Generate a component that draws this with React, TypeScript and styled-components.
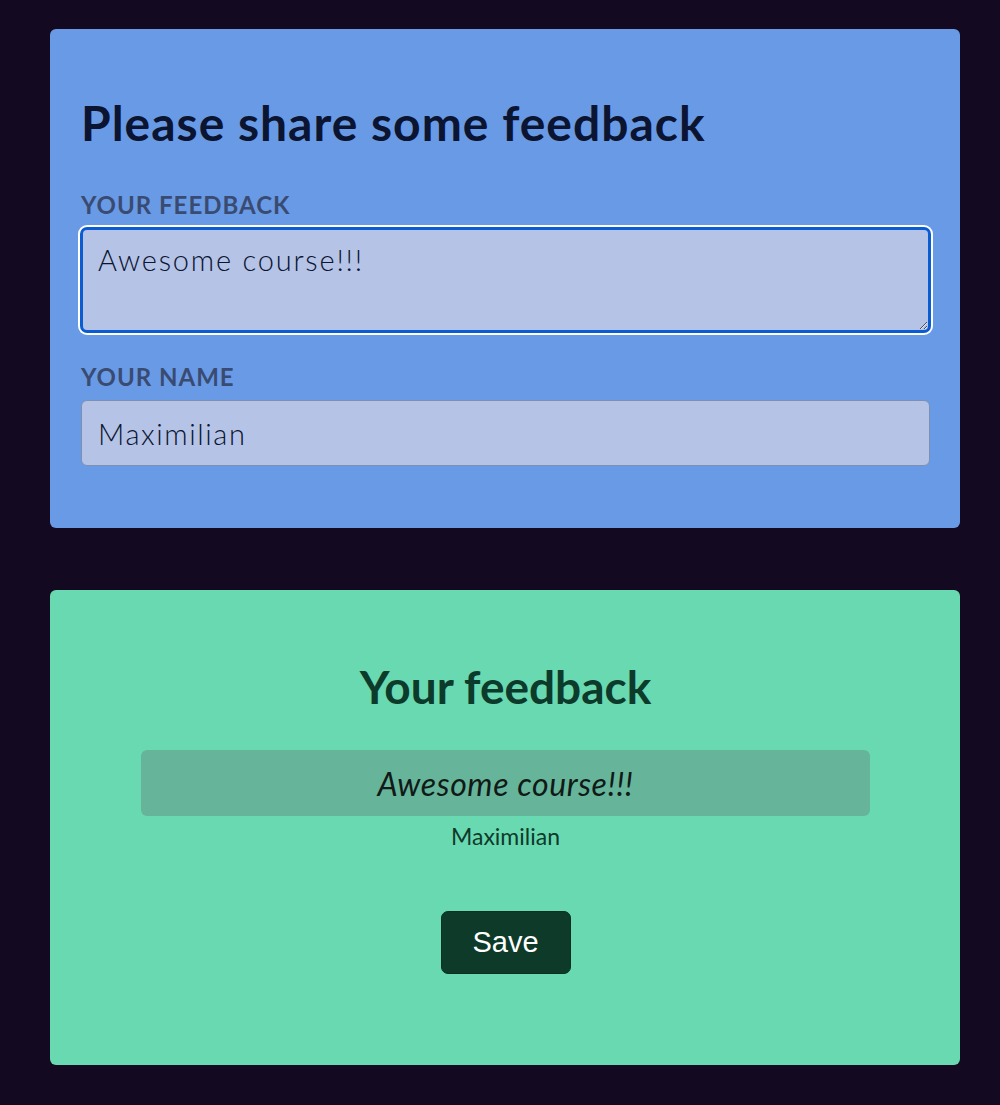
import React, { useState } from "react";
import styled, { createGlobalStyle } from "styled-components";

const Global = createGlobalStyle`
  html, body { margin: 0; padding: 0; background: #130a21; }
  body { font-family: "Lato", "Noto Sans", sans-serif; }
  * { box-sizing: border-box; }
`;

const Page = styled.div`
  display: flex;
  flex-direction: column;
  gap: 62px;
  padding: 29px 40px 40px 50px;
  min-height: 1105px;
`;

const Card = styled.section<{ $bg: string; $pt: number; $pb: number; $center?: boolean }>`
  background: ${(p) => p.$bg};
  border-radius: 6px;
  padding: ${(p) => `${p.$pt}px 30px ${p.$pb}px 31px`};
  text-align: ${(p) => (p.$center ? "center" : "left")};
`;

const FormTitle = styled.h2`
  margin: 0 0 38px;
  font-size: 48px;
  line-height: 58px;
  font-weight: 700;
  letter-spacing: 1px;
  color: #0b1430;
`;

const Field = styled.div<{ $last?: boolean }>`
  display: flex;
  flex-direction: column;
  margin-bottom: ${(p) => (p.$last ? 0 : 30)}px;
`;

const Label = styled.label`
  display: block;
  font-size: 24px;
  line-height: 29px;
  font-weight: 700;
  letter-spacing: 1px;
  text-transform: uppercase;
  color: #3a4b72;
  margin-bottom: 9px;
`;

const inputBase = `
  width: 100%;
  font-family: "Lato", "Noto Sans", sans-serif;
  font-size: 29px;
  font-weight: 300;
  color: #0b1430;
  background: #b4c3e6;
  border-radius: 6px;
  margin: 0;
`;

const TextArea = styled.textarea`
  ${inputBase}
  display: block;
  height: 104px;
  resize: vertical;
  letter-spacing: 1.8px;
  border: 2px solid #0b5bd3;
  box-shadow: 0 0 0 1px #0b5bd3, 0 0 0 3px #ffffff;
  outline: none;
  line-height: 36px;
  padding: 12px 15px;
`;

const TextInput = styled.input`
  ${inputBase}
  display: block;
  height: 66px;
  letter-spacing: 1.6px;
  border: 1px solid #7e8fb2;
  outline: none;
  line-height: 36px;
  padding: 14px 16px;
`;

const ResultTitle = styled.h2`
  margin: 0 0 36px;
  font-size: 46px;
  line-height: 55px;
  font-weight: 700;
  color: #0d3b2b;
`;

const Quote = styled.p`
  margin: 0 60px;
  height: 66px;
  display: flex;
  align-items: center;
  justify-content: center;
  background: #66b59b;
  border-radius: 6px;
  font-size: 32px;
  letter-spacing: 0.6px;
  font-style: italic;
  color: #111a16;
`;

const Author = styled.p`
  margin: 7px 0 61px;
  font-size: 23px;
  line-height: 27px;
  color: #0f3a2a;
`;

const SaveButton = styled.button`
  width: 130px;
  height: 63px;
  border: 1px solid #0a3022;
  border-radius: 7px;
  background: #0d3a29;
  color: #ffffff;
  font-family: "Liberation Sans", Arial, sans-serif;
  font-size: 29px;
  cursor: pointer;
`;

export default function App() {
  const [feedback, setFeedback] = useState("Awesome course!!!");
  const [name, setName] = useState("Maximilian");
  return (
    <>
      <Global />
      <Page>
        <Card $bg="#699ae6" $pt={65} $pb={62}>
          <FormTitle>Please share some feedback</FormTitle>
          <Field>
            <Label htmlFor="fb">Your feedback</Label>
            <TextArea id="fb" value={feedback} onChange={(e) => setFeedback(e.target.value)} />
          </Field>
          <Field $last>
            <Label htmlFor="nm">Your name</Label>
            <TextInput id="nm" value={name} onChange={(e) => setName(e.target.value)} />
          </Field>
        </Card>
        <Card $bg="#69d9b1" $pt={69} $pb={91} $center>
          <ResultTitle>Your feedback</ResultTitle>
          <Quote>{feedback}</Quote>
          <Author>{name}</Author>
          <SaveButton>Save</SaveButton>
        </Card>
      </Page>
    </>
  );
}
